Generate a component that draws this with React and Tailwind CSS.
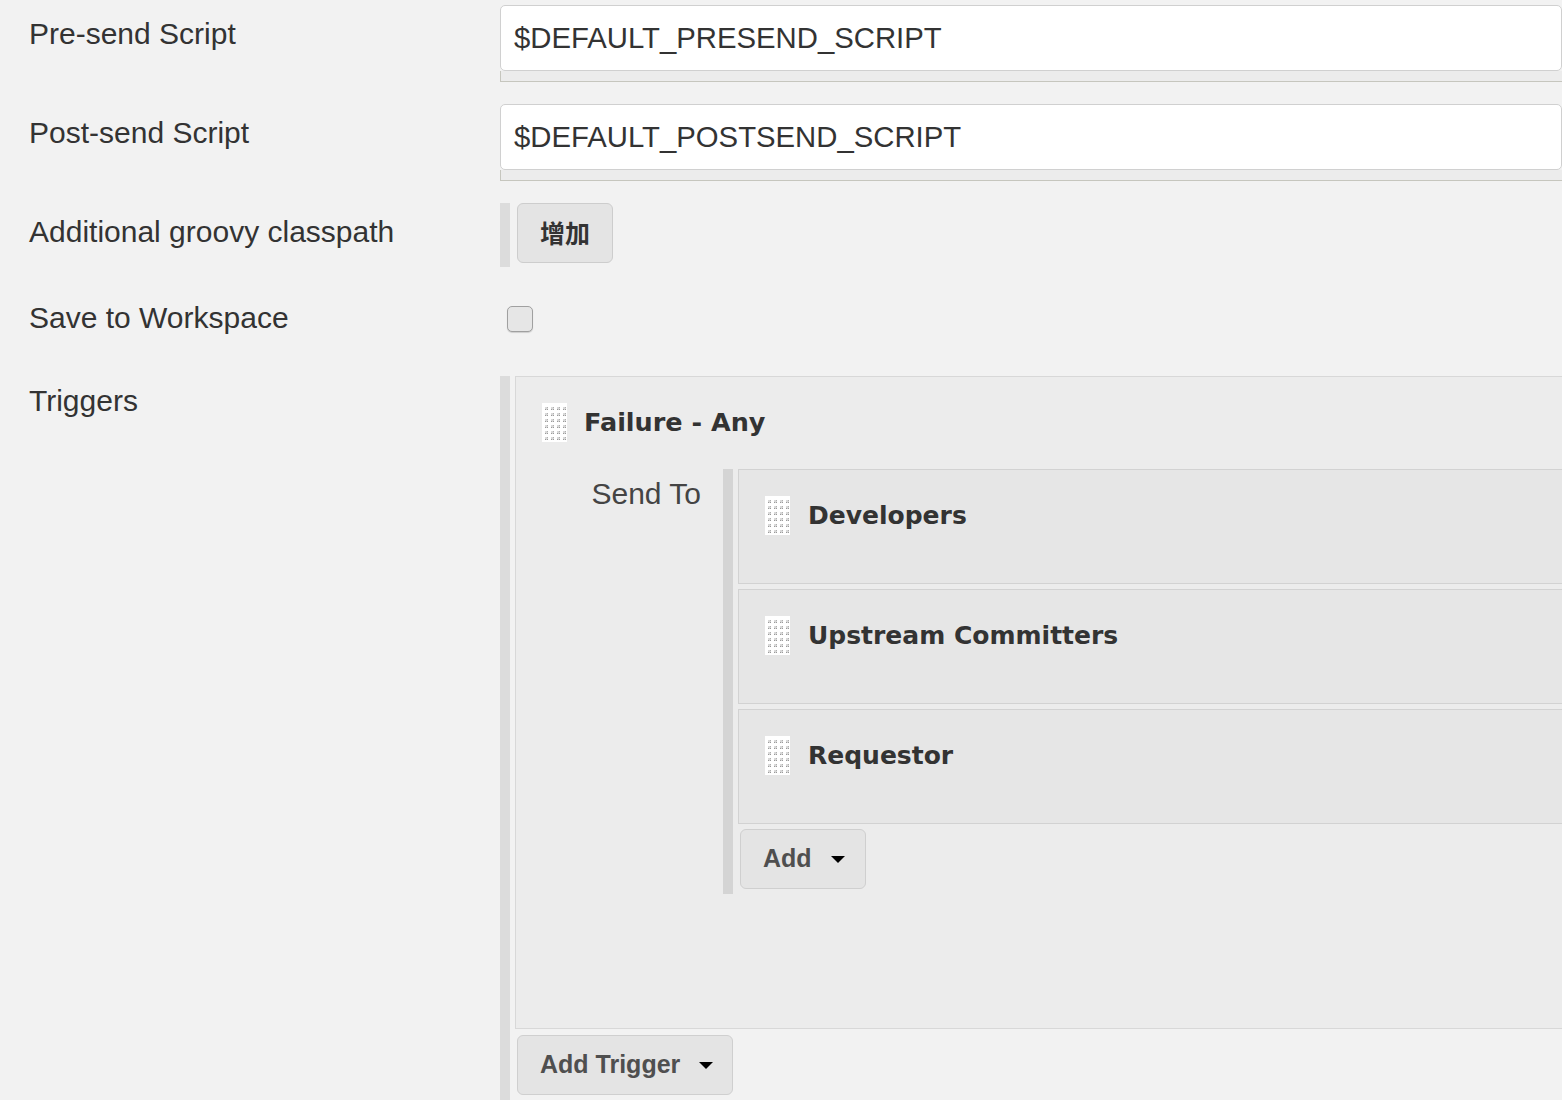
function DragHandle() {
  const cols = [3, 9, 15, 21];
  const rows = [4, 10, 16, 22, 28, 34];
  return (
    <svg width="25" height="39" viewBox="0 0 25 39" className="shrink-0">
      <rect width="25" height="39" fill="#ffffff" />
      {rows.map((y) =>
        cols.map((x) => (
          <g key={`${x}-${y}`}>
            <rect x={x} y={y} width="3" height="3" fill="#d8d8d8" />
            <rect x={x} y={y + 2} width="1" height="1" fill="#9a9a9a" />
            <rect x={x + 2} y={y + 2} width="1" height="1" fill="#9a9a9a" />
            <rect x={x + 2} y={y} width="1" height="1" fill="#b0b0b0" />
          </g>
        ))
      )}
    </svg>
  );
}

function Caret() {
  return (
    <span className="inline-block w-0 h-0 border-l-[7px] border-r-[7px] border-t-[7px] border-l-transparent border-r-transparent border-t-black" />
  );
}

function MenuButton({ label, width }) {
  return (
    <div
      className={`${width} h-[60px] rounded-[6px] border border-[#cfcfcf] bg-[#e4e4e4] flex items-center pl-[22px] gap-[19px] font-['Liberation_Sans'] font-bold text-[25px] text-[#4f4f4f]`}
    >
      <span>{label}</span>
      <Caret />
    </div>
  );
}

function TextareaField({ value }) {
  return (
    <div className="pt-[5px] w-[1100px]">
      <div className="h-[66px] bg-white border border-[#d0d0d0] rounded-[5px] flex items-center pl-[13px] text-[29.3px] text-[#333]">
        {value}
      </div>
      <div className="h-[11px] bg-[#ececec] border-l border-b border-[#c6c6be]" />
    </div>
  );
}

function Label({ children, pt }) {
  return (
    <div className={`w-[500px] shrink-0 pl-[29px] ${pt} leading-[30px]`}>{children}</div>
  );
}

function Recipient({ name }) {
  return (
    <div className="h-[115px] w-[1000px] bg-[#e6e6e6] border border-[#d2d2d2] pt-[26px] pl-[26px] flex items-start gap-[18px]">
      <DragHandle />
      <span className="font-['DejaVu_Sans'] font-bold text-[25px] text-[#333] leading-[39px]">
        {name}
      </span>
    </div>
  );
}

export default function App() {
  return (
    <div className="w-full h-[1100px] overflow-hidden bg-[#f2f2f2] font-['Liberation_Sans'] text-[30px] text-[#333]">
      {/* Pre-send */}
      <div className="flex h-[99px]">
        <Label pt="pt-[19px]">Pre-send Script</Label>
        <TextareaField value="$DEFAULT_PRESEND_SCRIPT" />
      </div>

      {/* Post-send */}
      <div className="flex h-[99px]">
        <Label pt="pt-[19px]">Post-send Script</Label>
        <TextareaField value="$DEFAULT_POSTSEND_SCRIPT" />
      </div>

      {/* Groovy classpath */}
      <div className="flex h-[88px]">
        <Label pt="pt-[19px]">Additional groovy classpath</Label>
        <div className="pt-[5px] flex items-start">
          <div className="w-[10px] h-[64px] bg-[#dcdcdc]" />
          <div className="ml-[7px] w-[96px] h-[60px] rounded-[6px] border border-[#cdcdcd] bg-[#e4e4e4] flex items-center justify-center font-['Noto_Sans_CJK_SC',sans-serif] font-bold text-[25px] text-[#333]">
            增加
          </div>
        </div>
      </div>

      {/* Save to workspace */}
      <div className="flex h-[90px]">
        <Label pt="pt-[17px]">Save to Workspace</Label>
        <div className="pt-[20px] pl-[7px]">
          <div className="w-[26px] h-[26px] rounded-[5px] border-[1.5px] border-[#a0a0a0] bg-[#e6e6e6] shadow-[0_1px_1px_rgba(0,0,0,0.15)]" />
        </div>
      </div>

      {/* Triggers */}
      <div className="flex h-[724px]">
        <Label pt="pt-[10px]">Triggers</Label>
        <div className="flex items-stretch">
          <div className="w-[10px] bg-[#dcdcdc]" />
          <div className="ml-[5px] flex flex-col">
            <div className="w-[1100px] h-[653px] bg-[#ececec] border border-[#d8d8d8] pt-[26px]">
              <div className="pl-[26px] flex items-center gap-[17px]">
                <DragHandle />
                <span className="font-['DejaVu_Sans'] font-bold text-[25.5px] text-[#333]">
                  Failure - Any
                </span>
              </div>
              <div className="mt-[27px] flex">
                <div className="w-[207px] shrink-0 text-right pr-[22px] pt-[10px] leading-[30px] text-[30px] text-[#444]">
                  Send To
                </div>
                <div className="flex items-stretch">
                  <div className="w-[10px] bg-[#d4d4d4]" />
                  <div className="ml-[5px] flex flex-col gap-[5px] pb-[5px]">
                    <Recipient name="Developers" />
                    <Recipient name="Upstream Committers" />
                    <Recipient name="Requestor" />
                    <div className="ml-[2px]">
                      <MenuButton label="Add" width="w-[126px]" />
                    </div>
                  </div>
                </div>
              </div>
            </div>
            <div className="mt-[6px] ml-[2px]">
              <MenuButton label="Add Trigger" width="w-[216px]" />
            </div>
          </div>
        </div>
      </div>
    </div>
  );
}
